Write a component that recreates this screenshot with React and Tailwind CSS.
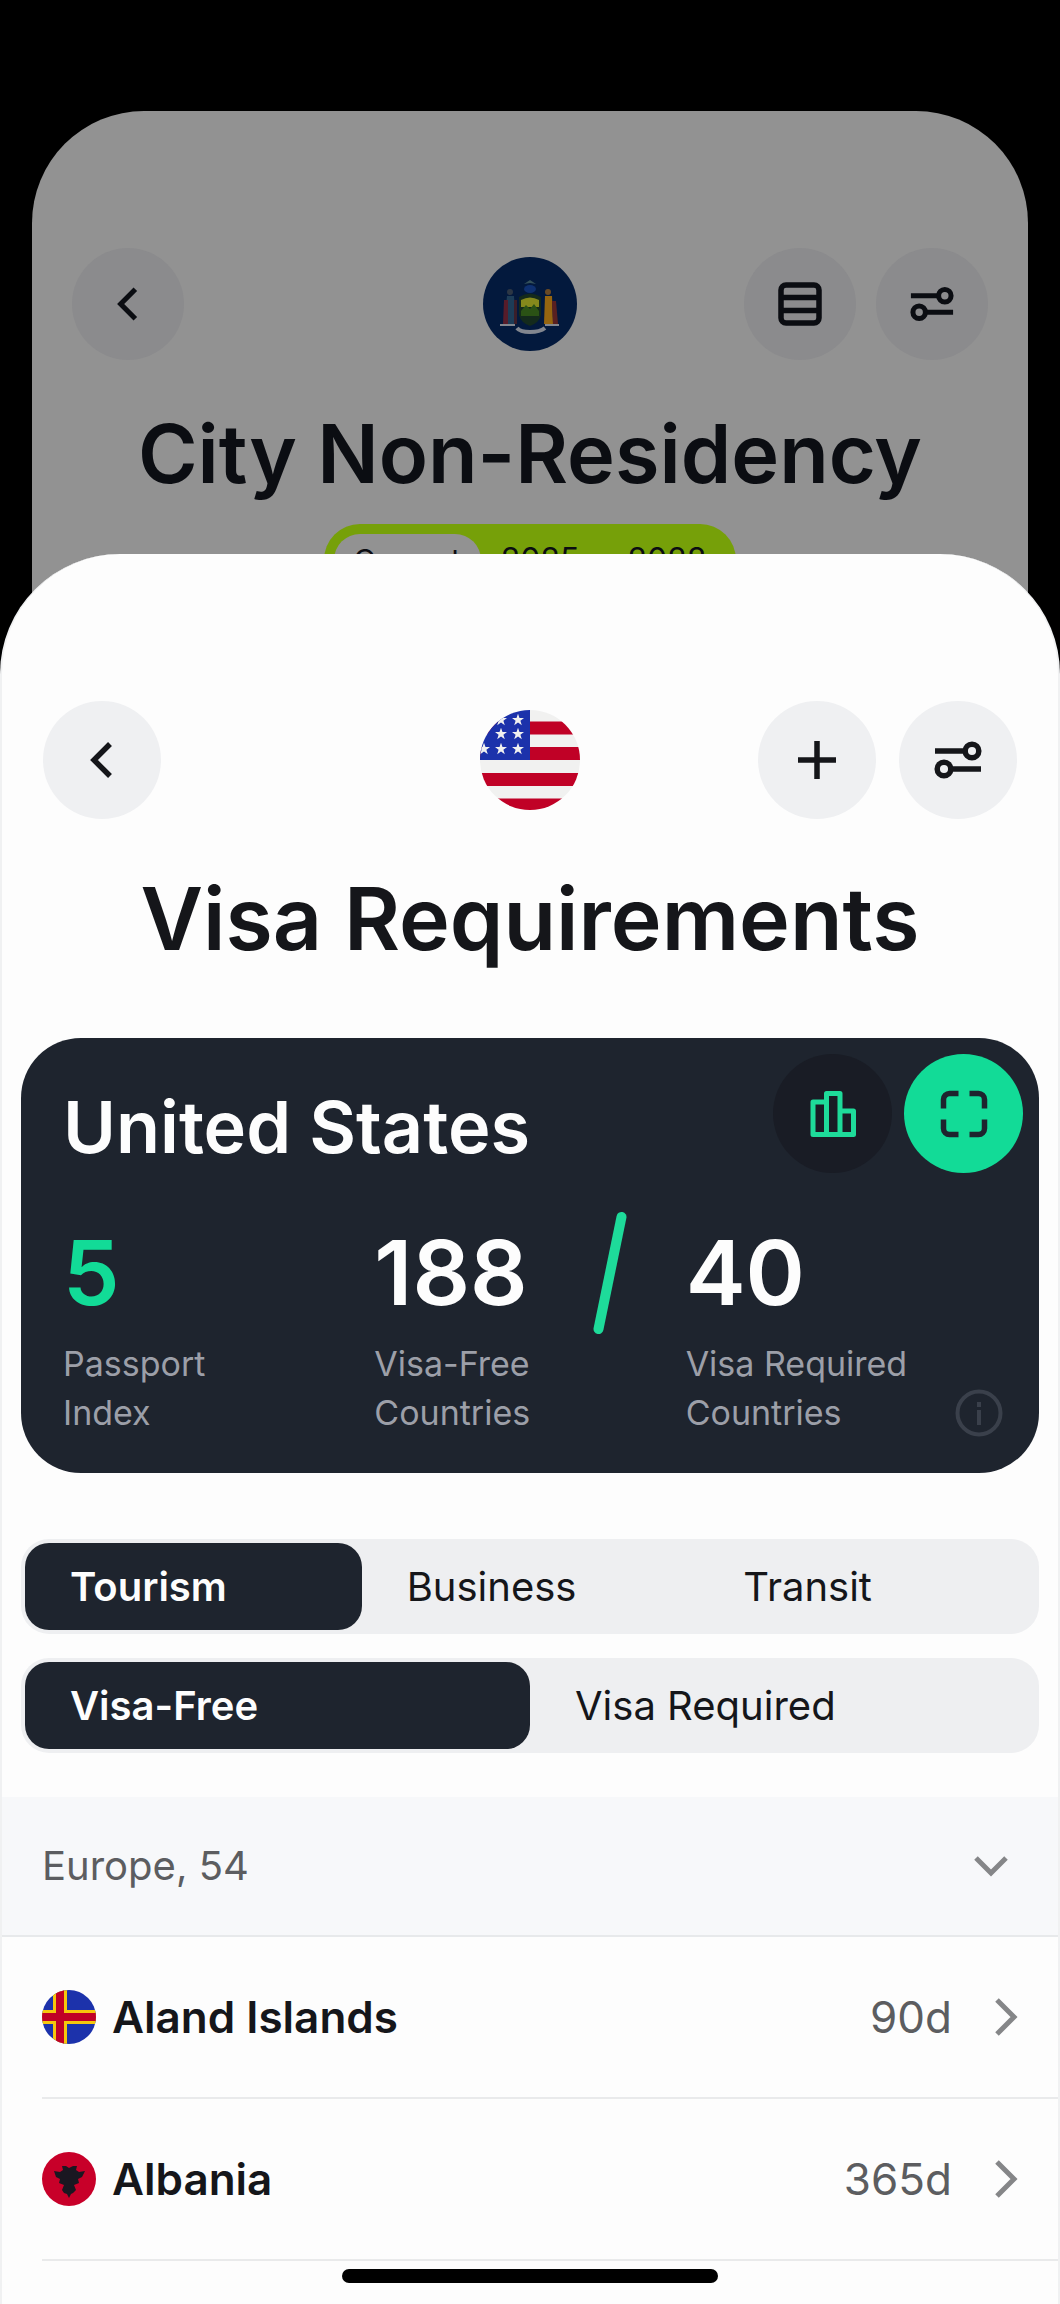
import React, { useState } from "react";

function BackIcon({ className }) {
  return (
    <svg viewBox="0 0 48 48" className={className} fill="none" stroke="currentColor" strokeWidth="5.500" aria-hidden="true">
      <path d="M32 8 16 24l16 16" />
    </svg>
  );
}

function SlidersIcon({ className }) {
  return (
    <svg viewBox="0 0 48 48" className={className} fill="none" stroke="currentColor" strokeWidth="5.500" aria-hidden="true">
      <path d="M1 15h30M17 33h30" />
      <circle cx="38" cy="15" r="6.800" />
      <circle cx="10" cy="33" r="6.800" />
    </svg>
  );
}

function PlusIcon() {
  return (
    <svg viewBox="0 0 48 48" className="size-12" fill="none" stroke="currentColor" strokeWidth="5.500" aria-hidden="true">
      <path d="M24 5v38M5 24h38" />
    </svg>
  );
}

function RowsIcon() {
  return (
    <svg viewBox="0 0 48 48" className="size-12" fill="none" stroke="currentColor" strokeWidth="5.500" aria-hidden="true">
      <rect x="5" y="5" width="38" height="38" rx="5" />
      <path d="M5 17.500h38M5 30.500h38" />
    </svg>
  );
}

function ChartIcon() {
  return (
    <svg viewBox="0 0 48 48" className="size-12" fill="none" stroke="currentColor" strokeWidth="5" strokeLinejoin="round" aria-hidden="true">
      <path d="M17.500 12H4v32.500h40.500V21H31" />
      <path d="M17.500 44.500V3.500H31v41" />
    </svg>
  );
}

function ExpandIcon() {
  return (
    <svg viewBox="0 0 48 48" className="size-12" fill="none" stroke="currentColor" strokeWidth="5.500" aria-hidden="true">
      <path d="M3.500 18.500V9.500a6 6 0 0 1 6-6h9M29.500 3.500h9a6 6 0 0 1 6 6v9M44.500 29.500v9a6 6 0 0 1-6 6h-9M18.500 44.500h-9a6 6 0 0 1-6-6v-9" />
    </svg>
  );
}

function InfoIcon() {
  return (
    <svg viewBox="0 0 48 48" className="size-12" fill="none" stroke="currentColor" strokeWidth="4" aria-hidden="true">
      <circle cx="24" cy="24" r="21.500" />
      <path d="M24 21v15M24 13v5" />
    </svg>
  );
}

function ChevronDown() {
  return (
    <svg viewBox="0 0 36 24" className="h-6 w-9" fill="none" stroke="currentColor" strokeWidth="5" aria-hidden="true">
      <path d="M3 4l15 15L33 4" />
    </svg>
  );
}

function ChevronRight() {
  return (
    <svg viewBox="0 0 24 40" className="h-10 w-6 text-[#858688]" fill="none" stroke="currentColor" strokeWidth="5" aria-hidden="true">
      <path d="M3 3l17 17L3 37" />
    </svg>
  );
}

const STAR = "M0-6.300 1.500-2H6L2.400.800 3.800 5.200 0 2.500-3.800 5.200-2.400.800-6-2h4.500z";
const STARS = [[21, 10], [38, 10], [21, 24], [38, 24], [4, 39], [21, 39], [38, 39]];

function UsFlag() {
  return (
    <svg viewBox="0 0 100 100" className="size-[100px]" role="img" aria-label="Flag of the United States">
      <clipPath id="us"><circle cx="50" cy="50" r="50" /></clipPath>
      <g clipPath="url(#us)">
        <rect width="100" height="100" fill="#f1f1f0" />
        <path fill="#c00126" d="M0 11.500h100v13H0zM0 37h100v13H0zM0 63h100v13H0zM0 88.500h100V100H0z" />
        <rect width="50" height="50" fill="#1c32ab" />
        {STARS.map(([x, y]) => (
          <path key={`${x}-${y}`} d={STAR} fill="#f1f1f0" transform={`translate(${x} ${y})`} />
        ))}
      </g>
    </svg>
  );
}

function NewYorkFlag() {
  return (
    <svg viewBox="0 0 94 94" className="size-[94px]" role="img" aria-label="Flag of New York">
      <circle cx="47" cy="47" r="47" fill="#03193d" />
      <ellipse cx="47" cy="32" rx="6" ry="4" fill="#0f3070" />
      <path d="M41 27l6-4 6 4-6-1z" fill="#34505a" />
      <path d="M36 40q11-7 22 0v18q-2 8-11 11-9-3-11-11z" fill="#142a1c" />
      <path d="M38 43q9-5 18 0v7H38z" fill="#85891c" />
      <path d="M38 54l5-6 4 4 4-5 5 7v5H38z" fill="#2b5215" />
      <circle cx="27" cy="35" r="3" fill="#2c3644" />
      <path d="M24 39h7l2 28H21z" fill="#1d3c57" />
      <path d="M21 43h4v24h-5z" fill="#561c2a" />
      <path d="M31 43h3v24h-3z" fill="#3a1e2a" />
      <circle cx="65" cy="35" r="3" fill="#6b4a24" />
      <path d="M62 39h7l1 28h-9z" fill="#966510" />
      <path d="M69 44h4l2 23h-5z" fill="#5a2020" />
      <path d="M17 68h15M62 68h14" stroke="#82868f" strokeWidth="2" />
      <path d="M34 71q3 4 13 4t15-4" fill="none" stroke="#82868f" strokeWidth="4" />
    </svg>
  );
}

function AlandFlag() {
  return (
    <svg viewBox="0 0 54 54" className="size-[54px]" aria-hidden="true">
      <clipPath id="aland"><circle cx="27" cy="27" r="27" /></clipPath>
      <g clipPath="url(#aland)">
        <rect width="54" height="54" fill="#1c32ab" />
        <path fill="#f6c70c" d="M11 0h14v54H11zM0 20h54v14H0z" />
        <path fill="#c00126" d="M14 0h8v54h-8zM0 23h54v8H0z" />
      </g>
    </svg>
  );
}

function AlbaniaFlag() {
  return (
    <svg viewBox="0 0 54 54" className="size-[54px]" aria-hidden="true">
      <circle cx="27" cy="27" r="27" fill="#c80029" />
      <path
        fill="#1a1721"
        d="M27 16l4-2h4l-1 4 3 2 6-1-3 6-4 2 1 4-5 2 2 5-3 3-2 1-2 4-2-4-3-1-2-3 2-5-5-2 1-4-4-2-2-6 6 1 3-2-1-4h4z"
      />
    </svg>
  );
}

function Tabs({ label, items }) {
  const [active, setActive] = useState(items[0]);
  return (
    <div role="tablist" aria-label={label} className="mx-[19px] flex rounded-[28px] bg-[#eeeff1] p-1">
      {items.map((item) => (
        <button
          key={item}
          type="button"
          role="tab"
          aria-selected={item === active}
          onClick={() => setActive(item)}
          className={
            item === active
              ? "h-[87px] flex-1 rounded-3xl bg-[#1e242e] px-[45px] text-left text-[40px] font-semibold text-[#fdfdfd]"
              : "h-[87px] flex-1 rounded-3xl px-[45px] text-left text-[40px] text-[#15161a]"
          }
        >
          {item}
        </button>
      ))}
    </div>
  );
}

function Stat({ value, label, tone, children }) {
  return (
    <div className="relative">
      <dd className={tone + " text-[90px] leading-[96px] font-semibold"}>{value}</dd>
      <dt className="mt-[18px] text-[34px] leading-[49px] text-[#9c9fa8]">
        {label[0]}
        <br />
        {label[1]}
      </dt>
      {children}
    </div>
  );
}

const COUNTRIES = [
  { name: "Aland Islands", days: "90d", Flag: AlandFlag },
  { name: "Albania", days: "365d", Flag: AlbaniaFlag },
];

export default function App() {
  return (
    <div className="min-h-screen bg-black pt-[111px] font-['Inter',sans-serif] text-[#15161a]">
      <section className="mx-8 rounded-t-[112px] bg-[#929292] pt-[137px] pb-10 text-[#0b0d12]">
        <div className="grid grid-cols-[1fr_auto_1fr] items-center px-10">
          <button type="button" aria-label="Back" className="flex size-28 items-center justify-center rounded-full bg-[#8b8b8d]">
            <BackIcon className="size-11" />
          </button>
          <NewYorkFlag />
          <div className="flex justify-end gap-5">
            <button type="button" aria-label="List view" className="flex size-28 items-center justify-center rounded-full bg-[#8b8b8d]">
              <RowsIcon />
            </button>
            <button type="button" aria-label="Filters" className="flex size-28 items-center justify-center rounded-full bg-[#8b8b8d]">
              <SlidersIcon className="size-11" />
            </button>
          </div>
        </div>
        <h2 className="mt-[46px] text-center text-[81px] leading-[96px] font-semibold">City Non-Residency</h2>
        <div className="mx-auto mt-[22px] flex h-[72px] w-fit items-center rounded-[36px] bg-[#76a009] px-[10px]">
          <span className="rounded-[26px] bg-[#929292] px-5 py-[6px] text-[30px] leading-[40px]">Current</span>
          <span className="flex gap-4 px-5 text-[32px]">
            <span>2025</span>
            <span>–</span>
            <span>2028</span>
          </span>
        </div>
      </section>

      <main className="relative -mt-[82px] rounded-t-[120px] border-x-2 border-[#f0f1f2] bg-[#fdfdfd] pt-[147px] pb-[22px]">
        <header className="grid grid-cols-[1fr_auto_1fr] items-center px-[41px]">
          <button type="button" aria-label="Back" className="flex size-[118px] items-center justify-center rounded-full bg-[#eff0f2]">
            <BackIcon className="size-12" />
          </button>
          <UsFlag />
          <div className="flex justify-end gap-[23px]">
            <button type="button" aria-label="Add" className="flex size-[118px] items-center justify-center rounded-full bg-[#eff0f2]">
              <PlusIcon />
            </button>
            <button type="button" aria-label="Filters" className="flex size-[118px] items-center justify-center rounded-full bg-[#eff0f2]">
              <SlidersIcon className="size-12" />
            </button>
          </div>
        </header>
        <h1 className="mt-12 text-center text-[86px] leading-[104px] font-semibold">Visa Requirements</h1>

        <section className="relative mx-[19px] mt-[67px] rounded-[60px] bg-[#1e242e] pt-4 pb-9">
          <div className="flex items-end justify-between pr-4 pl-[42px]">
            <h2 className="text-[72px] leading-[92px] font-semibold text-[#fdfdfd]">United States</h2>
            <div className="flex gap-3">
              <button type="button" aria-label="Rankings" className="flex size-[119px] items-center justify-center rounded-full bg-[#191c25] text-[#1edb9a]">
                <ChartIcon />
              </button>
              <button type="button" aria-label="Full screen" className="flex size-[119px] items-center justify-center rounded-full bg-[#12db97] text-[#1e242e]">
                <ExpandIcon />
              </button>
            </div>
          </div>
          <dl className="mt-[52px] grid grid-cols-3 px-[42px]">
            <Stat value="5" label={["Passport", "Index"]} tone="text-[#12db97]" />
            <Stat value="188" label={["Visa-Free", "Countries"]} tone="text-[#fdfdfd]">
              <svg viewBox="0 0 34 124" className="absolute -top-[14px] right-[59px] h-[124px] w-[34px]" aria-hidden="true">
                <path d="M28.500 6 5.500 118" stroke="#1edb9a" strokeWidth="10" strokeLinecap="round" />
              </svg>
            </Stat>
            <Stat value="40" label={["Visa Required", "Countries"]} tone="text-[#fdfdfd]" />
          </dl>
          <button type="button" aria-label="About these numbers" className="absolute right-9 bottom-9 text-[#3a404b]">
            <InfoIcon />
          </button>
        </section>

        <div className="mt-[66px] flex flex-col gap-6">
          <Tabs label="Purpose" items={["Tourism", "Business", "Transit"]} />
          <Tabs label="Requirement" items={["Visa-Free", "Visa Required"]} />
        </div>

        <button
          type="button"
          aria-expanded="true"
          className="mt-11 flex h-[140px] w-full items-center justify-between border-b-2 border-[#e7e9eb] bg-[#f7f8fa] pr-[49px] pl-10 text-[40px] text-[#5c5d60]"
        >
          <span>Europe, 54</span>
          <span className="text-[#858688]"><ChevronDown /></span>
        </button>
        <ul className="pl-10">
          {COUNTRIES.map(({ name, days, Flag }) => (
            <li key={name} className="border-b-2 border-[#e9eaeb]">
              <a href={"#" + name.toLowerCase().replace(" ", "-")} className="flex h-40 items-center pr-10 text-[44px]">
                <Flag />
                <span className="ml-4 flex-1 font-semibold">{name}</span>
                <span className="mr-[42px] text-[#5c5d60]">{days}</span>
                <ChevronRight />
              </a>
            </li>
          ))}
        </ul>
        <div className="mx-auto mt-2 h-[14px] w-[376px] rounded-full bg-black" />
      </main>
    </div>
  );
}
